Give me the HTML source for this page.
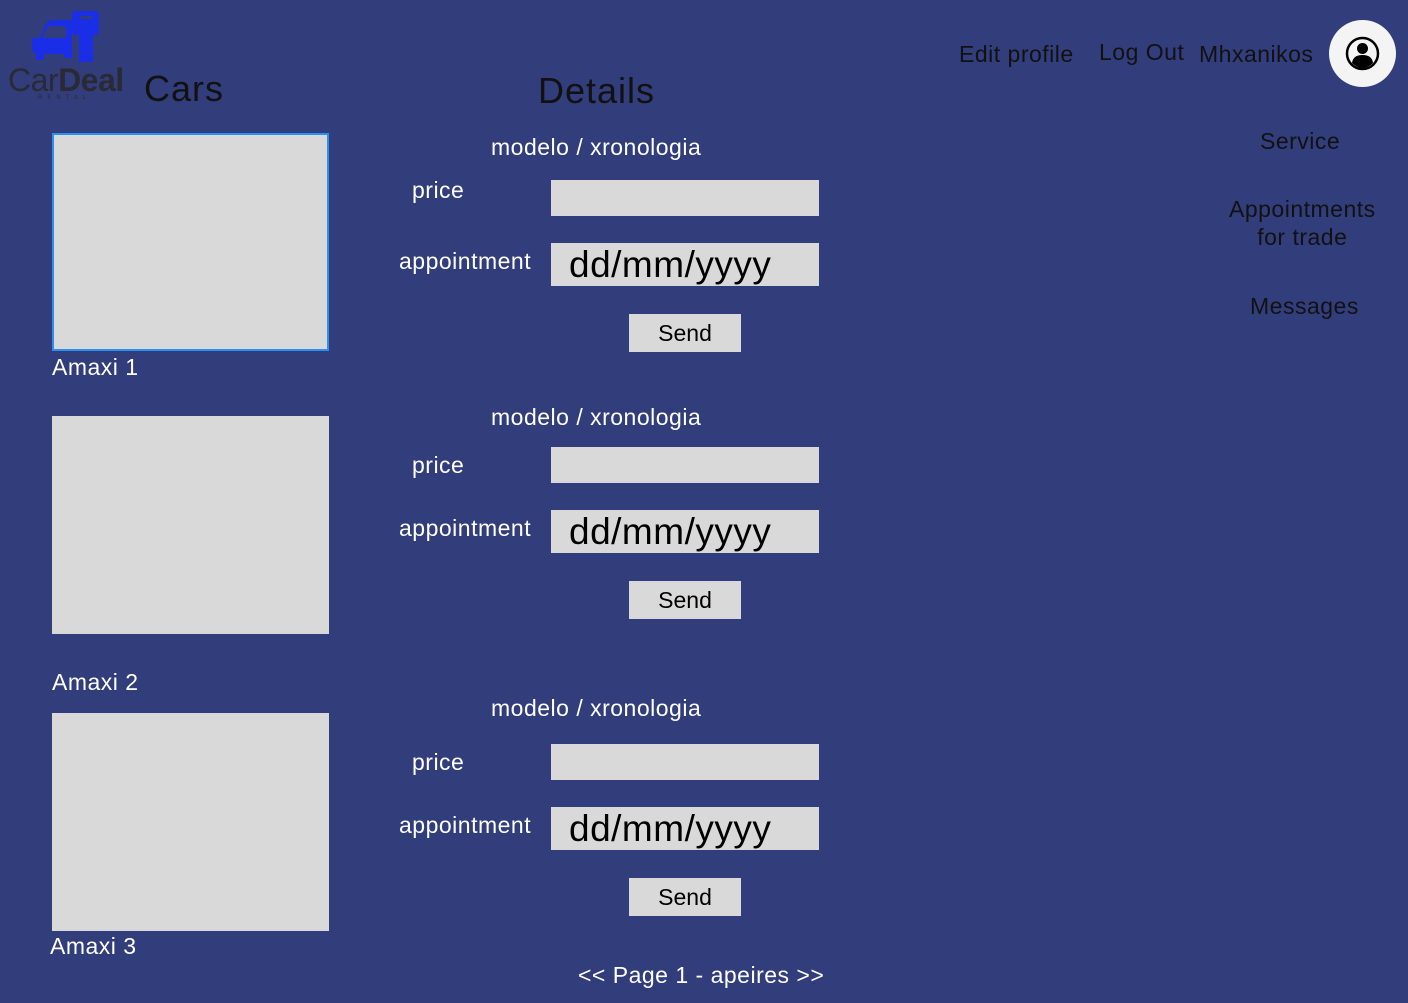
<!DOCTYPE html>
<html><head><style>
body{margin:0;width:1408px;height:1003px;background:#323d7b;font-family:"Liberation Sans",sans-serif;position:relative;overflow:hidden}
.a{position:absolute;white-space:nowrap}
.w{color:#fff;font-size:23px;letter-spacing:0.5px}
.k{color:#111;font-size:23px;letter-spacing:0.5px}
.box{position:absolute;background:#d9d9d9}
.img{position:absolute;left:52px;width:277px;background:#d9d9d9}
.dt{font-size:37px;color:#000;padding-left:18px;line-height:43px;box-sizing:border-box;letter-spacing:0.5px}
.send{font-size:23px;color:#000;text-align:center;line-height:38px}
</style></head><body>
<svg class="a" style="left:28px;top:10px" width="72" height="58" viewBox="0 0 72 58">
<path d="M4 28 L12 28 L18 14 Q20 10 26 10 L44 10 L44 48 L36 48 L36 44 L16 44 L16 50 L8 50 L8 44 Q4 42 4 38 Z" fill="#1a2ee8"/>
<path d="M20 16 L38 16 L38 28 L14 28 Z" fill="#323d7b"/>
<rect x="44" y="1" width="27" height="24" rx="4" fill="#1a2ee8"/>
<rect x="51" y="22" width="14" height="30" fill="#1a2ee8"/>
<rect x="52" y="6" width="12" height="3" fill="#323d7b"/>
</svg>
<div class="a" style="left:8px;top:62px;font-size:32px;color:#2a2a35;letter-spacing:-0.5px">Car<b>Deal</b></div>
<div class="a" style="left:38px;top:95px;font-size:6px;color:#2a2a35;letter-spacing:5px">RENTAL</div>
<div class="a k" style="left:144px;top:68px;font-size:36px;letter-spacing:1px">Cars</div>
<div class="a k" style="left:538px;top:70px;font-size:36px;letter-spacing:1px">Details</div>
<div class="a k" style="left:959px;top:41px">Edit profile</div>
<div class="a k" style="left:1099px;top:39px">Log Out</div>
<div class="a k" style="left:1199px;top:41px">Mhxanikos</div>
<div class="a" style="left:1329px;top:20px;width:67px;height:67px;border-radius:50%;background:#f4f4f4"></div>
<svg class="a" style="left:1345px;top:36px" width="35" height="35" viewBox="0 0 35 35">
<circle cx="17.5" cy="17.5" r="15.5" fill="none" stroke="#000" stroke-width="2.5"/>
<circle cx="17.5" cy="12.5" r="5.5" fill="#000"/>
<path d="M7 27 Q8 19 17.5 19 Q27 19 28 27 Q23 32 17.5 32 Q12 32 7 27Z" fill="#000"/>
</svg>
<div class="a k" style="left:1260px;top:128px">Service</div>
<div class="a k" style="left:1229px;top:195px;text-align:center;line-height:28px">Appointments<br>for trade</div>
<div class="a k" style="left:1250px;top:293px">Messages</div>

<div class="img" style="top:133px;height:218px;border:2px solid #2a8ff0;box-sizing:border-box"></div>
<div class="a w" style="left:52px;top:354px">Amaxi 1</div>
<div class="img" style="top:416px;height:218px"></div>
<div class="a w" style="left:52px;top:669px">Amaxi 2</div>
<div class="img" style="top:713px;height:218px"></div>
<div class="a w" style="left:50px;top:933px">Amaxi 3</div>

<div class="a w" style="left:491px;top:134px">modelo / xronologia</div>
<div class="a w" style="left:412px;top:177px">price</div>
<div class="box" style="left:551px;top:180px;width:268px;height:36px"></div>
<div class="a w" style="left:399px;top:248px">appointment</div>
<div class="box dt" style="left:551px;top:243px;width:268px;height:43px">dd/mm/yyyy</div>
<div class="box send" style="left:629px;top:314px;width:112px;height:38px">Send</div>

<div class="a w" style="left:491px;top:404px">modelo / xronologia</div>
<div class="a w" style="left:412px;top:452px">price</div>
<div class="box" style="left:551px;top:447px;width:268px;height:36px"></div>
<div class="a w" style="left:399px;top:515px">appointment</div>
<div class="box dt" style="left:551px;top:510px;width:268px;height:43px">dd/mm/yyyy</div>
<div class="box send" style="left:629px;top:581px;width:112px;height:38px">Send</div>

<div class="a w" style="left:491px;top:695px">modelo / xronologia</div>
<div class="a w" style="left:412px;top:749px">price</div>
<div class="box" style="left:551px;top:744px;width:268px;height:36px"></div>
<div class="a w" style="left:399px;top:812px">appointment</div>
<div class="box dt" style="left:551px;top:807px;width:268px;height:43px">dd/mm/yyyy</div>
<div class="box send" style="left:629px;top:878px;width:112px;height:38px">Send</div>

<div class="a w" style="left:578px;top:962px">&lt;&lt; Page 1 - apeires &gt;&gt;</div>
</body></html>
